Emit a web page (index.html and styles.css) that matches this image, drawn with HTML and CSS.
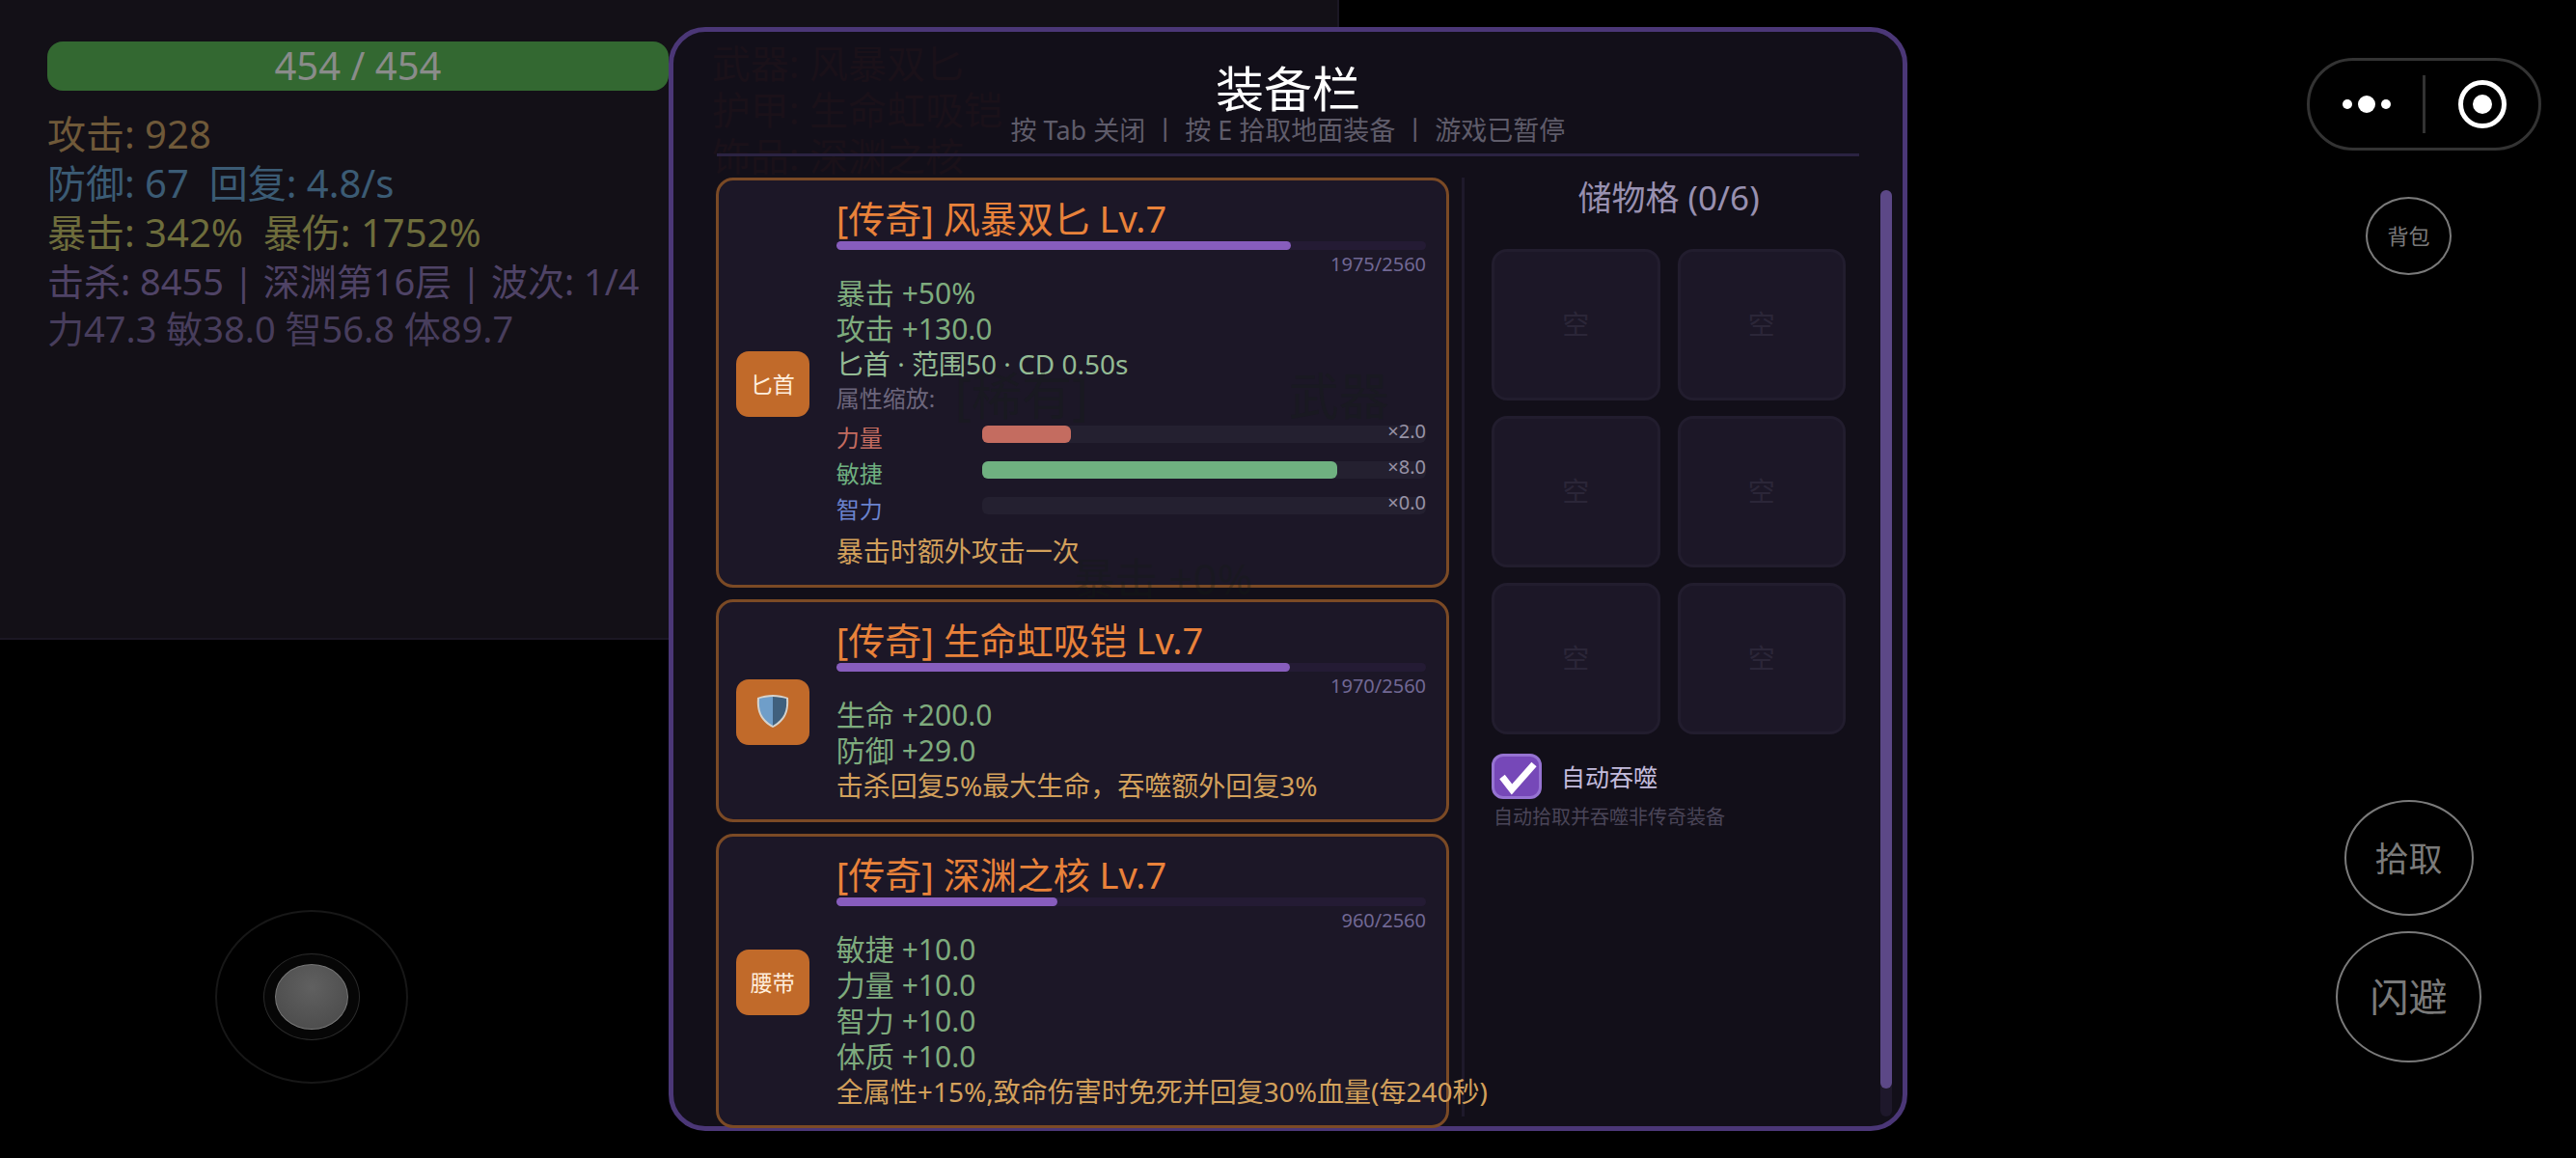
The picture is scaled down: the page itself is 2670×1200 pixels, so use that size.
FILE: index.html
```html
<!DOCTYPE html>
<html lang="zh-CN">
<head>
    <meta charset="UTF-8">
    <meta name="viewport" content="width=device-width, initial-scale=1.0">
    <title>装备栏</title>
    <link rel="stylesheet" href="styles.css">
</head>
<body>
    <div class="arena"></div>
    <div id="game">
        <!-- 左侧状态 -->
        <div class="hud">
            <div class="hp">454 / 454</div>
            <div class="stats">
                <p class="atk">攻击: 928</p>
                <p class="def">防御: 67  回复: 4.8/s</p>
                <p class="crit">暴击: 342%  暴伤: 1752%</p>
                <p class="kill">击杀: 8455 | 深渊第16层 | 波次: 1/4</p>
                <p class="attr">力47.3 敏38.0 智56.8 体89.7</p>
            </div>
            <div class="stick">
                <div class="stick-ring">
                    <div class="stick-knob"></div>
                </div>
            </div>
        </div>

        <!-- 装备栏 -->
        <div class="panel">
            <div class="behind">
                <p>武器: 风暴双匕</p>
                <p>护甲: 生命虹吸铠</p>
                <p>饰品: 深渊之核</p>
            </div>
            <div class="panel-header">
                <h1>装备栏</h1>
                <p>按 Tab 关闭 丨 按 E 拾取地面装备 丨 游戏已暂停</p>
            </div>
            <div class="panel-body">
                <div class="cards">
                    <div class="card">
                        <div class="icon">匕首</div>
                        <div class="detail">
                            <h2>[传奇] 风暴双匕 Lv.7</h2>
                            <div class="exp"><div style="width: 77.1%"></div></div>
                            <p class="count">1975/2560</p>
                            <p class="stat">暴击 +50%</p>
                            <p class="stat">攻击 +130.0</p>
                            <p class="info">匕首 · 范围50 · CD 0.50s</p>
                            <p class="scale-title">属性缩放:</p>
                            <div class="scale str">
                                <span>力量</span>
                                <div class="bar"><div style="width: 20%"></div><em>×2.0</em></div>
                            </div>
                            <div class="scale agi">
                                <span>敏捷</span>
                                <div class="bar"><div style="width: 80%"></div><em>×8.0</em></div>
                            </div>
                            <div class="scale int">
                                <span>智力</span>
                                <div class="bar"><div style="width: 0%"></div><em>×0.0</em></div>
                            </div>
                            <p class="effect spaced">暴击时额外攻击一次</p>
                        </div>
                    </div>
                    <div class="card">
                        <div class="icon">
                            <svg width="36" height="36" viewBox="0 0 36 36">
                                <path d="M18 1 C23 1 29 2 34 4 C35 17 32 28 18 35 C4 28 1 17 2 4 C7 2 13 1 18 1Z" fill="#d5d2cc"/>
                                <path d="M18 3 C13 3 8 4 4 5 C3 17 6 26 18 33Z" fill="#6f9ec9"/>
                                <path d="M18 3 C23 3 28 4 32 5 C33 17 30 26 18 33Z" fill="#40607d"/>
                            </svg>
                        </div>
                        <div class="detail">
                            <h2>[传奇] 生命虹吸铠 Lv.7</h2>
                            <div class="exp"><div style="width: 77%"></div></div>
                            <p class="count">1970/2560</p>
                            <p class="stat">生命 +200.0</p>
                            <p class="stat">防御 +29.0</p>
                            <p class="effect">击杀回复5%最大生命，吞噬额外回复3%</p>
                        </div>
                    </div>
                    <div class="card">
                        <div class="icon">腰带</div>
                        <div class="detail">
                            <h2>[传奇] 深渊之核 Lv.7</h2>
                            <div class="exp"><div style="width: 37.5%"></div></div>
                            <p class="count">960/2560</p>
                            <p class="stat">敏捷 +10.0</p>
                            <p class="stat">力量 +10.0</p>
                            <p class="stat">智力 +10.0</p>
                            <p class="stat">体质 +10.0</p>
                            <p class="effect">全属性+15%,致命伤害时免死并回复30%血量(每240秒)</p>
                        </div>
                    </div>
                    <!-- 地面掉落文字 -->
                    <div class="loot loot-name"><span>[稀有]</span><span>武器</span></div>
                    <div class="loot loot-stat">暴击 +0%</div>
                </div>
                <div class="split"></div>
                <div class="storage">
                    <h3>储物格 (0/6)</h3>
                    <div class="slots">
                        <div>空</div>
                        <div>空</div>
                        <div>空</div>
                        <div>空</div>
                        <div>空</div>
                        <div>空</div>
                    </div>
                    <div class="auto">
                        <span class="tick">
                            <input type="checkbox" id="auto" checked>
                            <svg viewBox="0 0 52 47"><path d="M11 24 L21 37 L44 11" fill="none" stroke="#fff" stroke-width="7"/></svg>
                        </span>
                        <label for="auto">自动吞噬</label>
                    </div>
                    <p class="hint">自动拾取并吞噬非传奇装备</p>
                </div>
                <div class="scrollbar"><div style="height: 97%"></div></div>
            </div>
        </div>

        <!-- 右侧按钮 -->
        <div class="controls">
            <div class="capsule">
                <button aria-label="更多">
                    <svg width="50" height="18" viewBox="0 0 50 18" fill="#fff">
                        <circle cx="5" cy="9" r="5"/><circle cx="25" cy="9" r="9"/><circle cx="45" cy="9" r="5"/>
                    </svg>
                </button>
                <i></i>
                <button aria-label="关闭">
                    <svg width="50" height="50" viewBox="0 0 50 50">
                        <circle cx="25" cy="25" r="22.5" fill="none" stroke="#fff" stroke-width="5"/>
                        <circle cx="25" cy="25" r="10" fill="#fff"/>
                    </svg>
                </button>
            </div>
            <div class="rounds">
                <button class="bag">背包</button>
                <button class="pick">拾取</button>
                <button class="dodge">闪避</button>
            </div>
        </div>
    </div>
</body>
</html>
```

FILE: styles.css
```css
* {
    margin: 0;
    padding: 0;
    box-sizing: border-box;
}
body {
    background-color: #000000;
    font-family: "Noto Sans", "Noto Sans CJK SC", sans-serif;
}
h1, h2, h3 {
    font-weight: normal;
}
p, h2 {
    white-space: pre;
}
button {
    background: none;
    border: 0;
    font-family: inherit;
    cursor: pointer;
}
.arena {
    position: absolute;
    left: 0;
    top: 0;
    width: 52%;
    height: 663px;
    background-color: #131017;
    border-right: 2px solid #1b1724;
    border-bottom: 2px solid #1b1724;
}
#game {
    position: relative;
    display: grid;
    grid-template-columns: 1fr 48.1% 1fr;
    min-height: 100vh;
}

/* 左侧状态 */
.hud {
    min-width: 0;
    display: flex;
    flex-direction: column;
    padding: 43px 0 77px 49px;
}
.hp {
    height: 51px;
    line-height: 49px;
    border-radius: 16px;
    background-color: #336831;
    color: #8a8c8a;
    font-size: 40px;
    text-align: center;
}
.stats {
    margin-top: 19px;
    font-size: 40px;
    line-height: 51px;
}
.atk {
    color: #6f5939;
}
.def {
    color: #3b5b74;
}
.crit {
    color: #6e6d3c;
}
.stats .kill {
    color: #4f4366;
    font-size: 38px;
}
.stats .attr {
    color: #473d5c;
    font-size: 38px;
    line-height: 46px;
}
.stick {
    width: 200px;
    height: 180px;
    margin: auto 0 0 174px;
    border: 2px solid #171717;
    border-radius: 50%;
    display: flex;
    align-items: center;
    justify-content: center;
}
.stick-ring {
    width: 100px;
    height: 90px;
    border: 1px solid #2a2a2a;
    border-radius: 50%;
    background-color: #060606;
    display: flex;
    align-items: center;
    justify-content: center;
}
.stick-knob {
    width: 76px;
    height: 68px;
    border: 1px solid #777777;
    border-radius: 50%;
    background: radial-gradient(circle at 50% 35%, #606060, #484848);
}

/* 装备栏 */
.panel {
    position: relative;
    margin: 28px 0;
    border: 5px solid #4b3777;
    border-radius: 38px;
    background-color: #120f19;
}
.behind {
    position: absolute;
    left: 40px;
    top: 9px;
    color: #1a1119;
    font-size: 40px;
    line-height: 48px;
}
.panel-header {
    position: relative;
    margin: 0 45px;
    padding: 29px 0 11px;
    border-bottom: 3px solid #2b2342;
    text-align: center;
}
.panel-header h1 {
    color: #ffffff;
    font-size: 50px;
    line-height: 60px;
}
.panel-header p {
    color: #5f5c6a;
    font-size: 27px;
    line-height: 26px;
}
.panel-body {
    position: relative;
    display: grid;
    grid-template-columns: 773fr 3px 431fr 12px;
    margin: 22px 11px -2px 44px;
}
.cards {
    position: relative;
    z-index: 1;
    min-width: 0;
    margin-right: 13px;
    display: flex;
    flex-direction: column;
    gap: 12px;
}
.card {
    display: flex;
    align-items: center;
    gap: 28px;
    padding: 19px 21px 17px 18px;
    border: 3px solid #7b4a25;
    border-radius: 18px;
    background-color: #1c1727;
}
.icon {
    flex: none;
    width: 76px;
    height: 68px;
    padding-bottom: 2px;
    border-radius: 13px;
    background-color: #c16a2a;
    color: #ffeedd;
    font-size: 23px;
    display: flex;
    align-items: center;
    justify-content: center;
}
.detail {
    flex: 1;
    min-width: 0;
}
.detail h2 {
    color: #e9823a;
    font-size: 38px;
    line-height: 40px;
}
.exp {
    height: 9px;
    margin-top: 4px;
    border-radius: 5px;
    background-color: #241b34;
}
.exp > div {
    height: 100%;
    border-radius: 5px;
    background-color: #875dbd;
}
.count {
    margin-top: 4px;
    color: #716894;
    font-size: 20px;
    line-height: 22px;
    text-align: right;
}
.stat {
    color: #7eab7d;
    font-size: 30px;
    line-height: 37px;
}
.info {
    color: #94bb94;
    font-size: 28px;
    line-height: 36px;
}
.effect {
    color: #d2a05b;
    font-size: 28px;
    line-height: 36px;
}
.effect.spaced {
    margin-top: 11px;
}
.scale-title {
    color: #6c667c;
    font-size: 24px;
    line-height: 36px;
}
.scale {
    height: 37px;
    display: flex;
    align-items: center;
}
.scale > span {
    width: 151px;
    padding-top: 9px;
    font-size: 24px;
    line-height: 28px;
}
.bar {
    position: relative;
    flex: 1;
    height: 18px;
    border-radius: 6px;
    background-color: #242030;
}
.bar > div {
    height: 100%;
    border-radius: 6px;
}
.bar > em {
    position: absolute;
    right: 0;
    bottom: 0;
    color: #9893a6;
    font-size: 20px;
    font-style: normal;
    line-height: 24px;
}
.str > span {
    color: #c46c60;
}
.str .bar > div {
    background-color: #c46c60;
}
.agi > span {
    color: #6fb080;
}
.agi .bar > div {
    background-color: #6fb080;
}
.int > span {
    color: #6b83cd;
}
.int .bar > div {
    background-color: #6b83cd;
}

/* 地面掉落，透过面板隐约可见 */
.loot {
    position: absolute;
    color: rgba(20, 30, 20, 0.3);
    pointer-events: none;
}
.loot-name {
    left: 248px;
    top: 198px;
    width: 450px;
    display: flex;
    justify-content: space-between;
    font-size: 52px;
    line-height: 56px;
}
.loot-stat {
    left: 370px;
    top: 390px;
    font-size: 44px;
    line-height: 50px;
}

/* 储物格 */
.split {
    margin-bottom: 12px;
    background-color: #1e192b;
}
.storage {
    margin: 0 36px 0 28px;
}
.storage h3 {
    color: #9890b0;
    font-size: 35px;
    line-height: 42px;
    text-align: center;
}
.slots {
    display: grid;
    grid-template-columns: 1fr 1fr;
    gap: 16px 18px;
    margin-top: 32px;
}
.slots > div {
    height: 157px;
    padding-bottom: 4px;
    border: 3px solid #221d2e;
    border-radius: 16px;
    background-color: #1c1727;
    color: #2b2638;
    font-size: 28px;
    display: flex;
    align-items: center;
    justify-content: center;
}
.auto {
    display: flex;
    align-items: center;
    gap: 20px;
    margin-top: 20px;
}
.tick {
    position: relative;
    width: 52px;
    height: 47px;
}
.tick input {
    appearance: none;
    display: block;
    width: 100%;
    height: 100%;
    border: 3px solid #9673d2;
    border-radius: 12px;
    background-color: #7648b8;
}
.tick svg {
    position: absolute;
    left: 0;
    top: 0;
    width: 100%;
    height: 100%;
    display: none;
    pointer-events: none;
}
.tick input:checked + svg {
    display: block;
}
.auto label {
    color: #c3bbdc;
    font-size: 25px;
    line-height: 36px;
}
.hint {
    margin-top: 7px;
    padding-left: 2px;
    color: #4a4558;
    font-size: 20px;
    line-height: 24px;
}
.scrollbar {
    margin: 13px 0 12px;
    border-radius: 6px;
    background-color: #1e182b;
}
.scrollbar > div {
    border-radius: 6px;
    background-color: #5c4887;
}

/* 右侧按钮 */
.controls {
    display: flex;
    flex-direction: column;
    align-items: flex-end;
    padding: 60px 36px 99px 0;
}
.capsule {
    width: 243px;
    height: 96px;
    border: 3px solid #333333;
    border-radius: 48px;
    display: flex;
    align-items: center;
}
.capsule button {
    flex: 1;
    height: 100%;
}
.capsule svg {
    display: block;
    margin: 0 auto;
}
.capsule i {
    width: 3px;
    height: 60px;
    background-color: #333333;
}
.rounds {
    flex: 1;
    display: flex;
    flex-direction: column;
    align-items: center;
    margin: 48px 62px 0 0;
}
.rounds button {
    padding-bottom: 4px;
    border: 2px solid #7a7a7a;
    border-radius: 50%;
    color: #7a7a7a;
}
.rounds .bag {
    width: 89px;
    height: 81px;
    font-size: 22px;
}
.rounds .pick {
    width: 134px;
    height: 120px;
    margin: auto 0 16px;
    font-size: 35px;
}
.rounds .dodge {
    width: 151px;
    height: 136px;
    font-size: 40px;
}
```
